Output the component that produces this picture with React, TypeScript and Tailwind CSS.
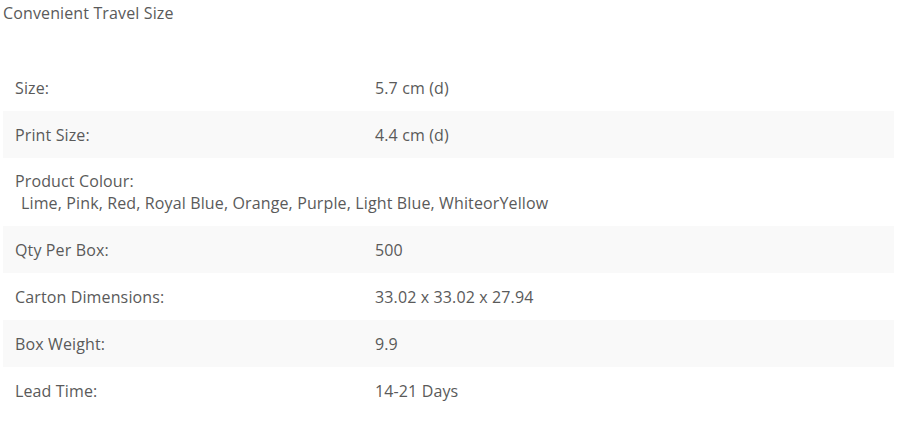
const rows: { label: string; value?: string; full?: string }[] = [
  { label: "Size:", value: "5.7 cm (d)" },
  { label: "Print Size:", value: "4.4 cm (d)" },
  { label: "Product Colour:", full: "Lime, Pink, Red, Royal Blue, Orange, Purple, Light Blue, WhiteorYellow" },
  { label: "Qty Per Box:", value: "500" },
  { label: "Carton Dimensions:", value: "33.02 x 33.02 x 27.94" },
  { label: "Box Weight:", value: "9.9" },
  { label: "Lead Time:", value: "14-21 Days" },
];

export default function App() {
  return (
    <div className="h-[424px] w-[902px] bg-white font-['Open_Sans',sans-serif] text-[16px] font-normal tracking-[0.13px] text-[#5a5a5a]">
      <p className="pl-[3px] pt-[2px] leading-[22px]">Convenient Travel Size</p>
      <table className="ml-[3px] mt-[40px] w-[891px] border-collapse">
        <tbody>
          {rows.map((r, i) =>
            r.full ? (
              <tr key={r.label} className={i % 2 === 1 ? "bg-[#f9f9f9]" : ""}>
                <td colSpan={2} className="h-[68px] px-3 py-[12px] align-middle leading-[22px]">
                  {r.label}
                  <br />
                  <span className="pl-[6px]">{r.full}</span>
                </td>
              </tr>
            ) : (
              <tr key={r.label} className={i % 2 === 1 ? "bg-[#f9f9f9]" : ""}>
                <td className="h-[47px] w-[360px] px-3 align-middle">{r.label}</td>
                <td className="h-[47px] px-3 align-middle">{r.value}</td>
              </tr>
            )
          )}
        </tbody>
      </table>
    </div>
  );
}
